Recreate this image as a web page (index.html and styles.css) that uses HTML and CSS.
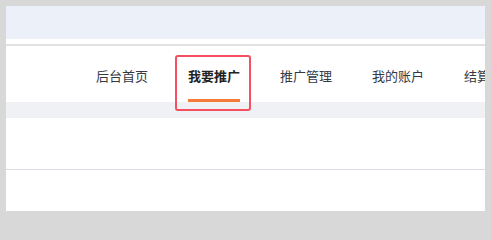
FILE: index.html
```html
<!DOCTYPE html>
<html lang="zh-CN">
<head>
<meta charset="utf-8">
<title>推广</title>
<link rel="stylesheet" href="styles.css">
</head>
<body>
<div class="frame">
  <div class="topband"></div>
  <div class="divider"></div>
  <nav class="nav">
    <div class="nav-item">后台首页</div>
    <div class="nav-item active">我要推广<span class="underline"></span><span class="highlight"></span></div>
    <div class="nav-item">推广管理</div>
    <div class="nav-item">我的账户</div>
    <div class="nav-item">结算中心</div>
  </nav>
  <div class="greyband"></div>
  <div class="content"></div>
  <div class="footer"></div>
</div>
</body>
</html>
```

FILE: styles.css
```css
html, body {
  margin: 0;
  padding: 0;
}
body {
  background: #d8d8d8;
  padding: 6px;
  font-family: "Noto Sans CJK SC", "Noto Sans", sans-serif;
}
.frame {
  background: #ffffff;
  height: 205px;
  overflow: hidden;
  display: flex;
  flex-direction: column;
}
.topband {
  height: 33px;
  background: #ebf0f9;
  flex: none;
}
.divider {
  height: 5px;
  border-bottom: 2px solid #e2e2e2;
  flex: none;
}
.nav {
  height: 56px;
  display: flex;
  padding-left: 70px;
  flex: none;
  white-space: nowrap;
  overflow: hidden;
}
.nav-item {
  position: relative;
  padding: 3px 20px 0;
  display: flex;
  align-items: center;
  font-size: 13px;
  color: #333a44;
  flex: none;
}
.nav-item.active {
  font-weight: bold;
  color: #222222;
}
.underline {
  position: absolute;
  left: 20px;
  right: 20px;
  bottom: 0;
  height: 3px;
  background: #f47b3a;
}
.highlight {
  position: absolute;
  left: 7px;
  right: 9px;
  top: 9px;
  bottom: -9px;
  border: 2px solid #f5505f;
  border-radius: 3px;
  z-index: 2;
}
.nav:has(.highlight) {
  overflow: visible;
}
.greyband {
  height: 16px;
  background: #f0f1f5;
  flex: none;
}
.content {
  height: 51px;
  border-bottom: 1px solid #dddbe3;
  flex: none;
}
.footer {
  flex: 1;
}
```
